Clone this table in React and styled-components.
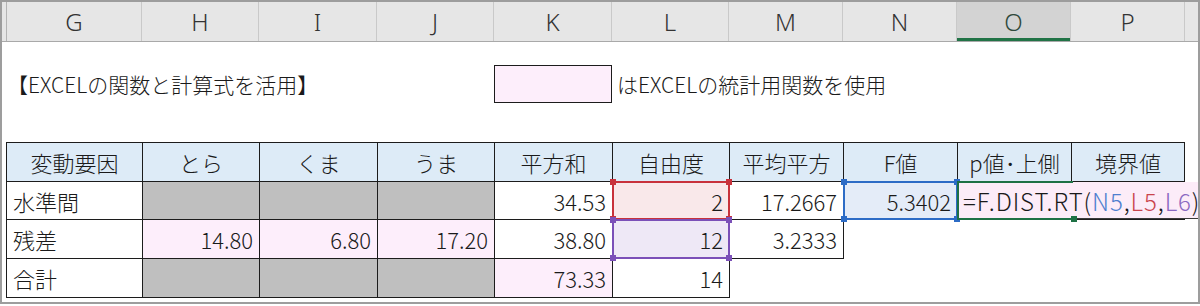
import React from "react";
import styled, { createGlobalStyle, css } from "styled-components";

const GlobalStyle = createGlobalStyle`
  html, body { margin: 0; padding: 0; background: #ffffff; }
  body { font-family: "Noto Sans CJK JP", "Noto Sans", sans-serif; font-weight: 300; }
  *, *::before, *::after { box-sizing: border-box; }
`;

const COLUMNS = [
  { key: "G", width: 135 },
  { key: "H", width: 117 },
  { key: "I", width: 118 },
  { key: "J", width: 117 },
  { key: "K", width: 118 },
  { key: "L", width: 117 },
  { key: "M", width: 114 },
  { key: "N", width: 114 },
  { key: "O", width: 114, active: true },
  { key: "P", width: 114 },
];

const TABLE_WIDTHS = [136, 117, 118, 117, 118, 117, 114, 114, 114, 113];

const FILLS = {
  head: "#ddebf7",
  gray: "#bfbfbf",
  pink: "#fdeefb",
  white: "#ffffff",
};

const REF = {
  red: { line: "#c8323c", tint: "rgba(200, 50, 60, 0.11)" },
  purple: { line: "#7b50b8", tint: "rgba(123, 80, 184, 0.13)" },
  blue: { line: "#2d6cc6", tint: "rgba(45, 108, 198, 0.13)" },
  green: { line: "#1e7145", tint: "transparent" },
};

const Window = styled.div`
  width: 1200px;
  height: 304px;
  border: 2px solid #9d9d9d;
  background: #ffffff;
  overflow: hidden;
`;

const ColumnBar = styled.div`
  display: flex;
  height: 40px;
  background: #e6e6e6;
  border-bottom: 1px solid #a9a9a9;
`;

const Corner = styled.div`
  width: 5px;
  flex: none;
  border-right: 1px solid #b4b4b4;
`;

const ColHead = styled.div`
  flex: none;
  width: ${(p) => p.$w}px;
  display: flex;
  align-items: center;
  justify-content: center;
  font-family: "Noto Sans", "Liberation Sans", sans-serif;
  font-weight: 300;
  font-size: 24px;
  color: #333333;
  border-right: 1px solid #c9c9c9;
  ${(p) =>
    p.$active &&
    css`
      background: #d3d3d3;
      color: #2f4a3c;
      box-shadow: inset 0 -3px 0 #217346;
    `}
`;

const Sheet = styled.div`
  padding-left: 4px;
`;

const BannerRow = styled.div`
  display: grid;
  grid-template-columns: ${COLUMNS.map((c) => `${c.width}px`).join(" ")};
  height: 38px;
  margin: 23px 0 0 1px;
  align-items: center;
  font-size: 21px;
  color: #1a1a1a;
`;

const Title = styled.div`
  grid-column: 1 / span 4;
  white-space: nowrap;
`;

const LegendSwatch = styled.div`
  grid-column: 5;
  align-self: stretch;
  background: ${FILLS.pink};
  border: 1px solid #1c1c1c;
`;

const LegendNote = styled.div`
  grid-column: 6 / span 5;
  white-space: nowrap;
  padding-left: 5px;
`;

const Table = styled.table`
  border-collapse: collapse;
  table-layout: fixed;
  width: ${TABLE_WIDTHS.reduce((a, b) => a + b, 0)}px;
  margin-top: 39px;
`;

const Row = styled.tr`
  height: ${(p) => p.$h}px;
`;

const Cell = styled.td`
  position: relative;
  padding: 0 6px;
  font-size: 22px;
  color: #1a1a1a;
  white-space: nowrap;
  overflow: visible;
  text-align: ${(p) => p.$align || "left"};
  background: ${(p) => (p.$fill ? FILLS[p.$fill] : "transparent")};
  border: ${(p) => (p.$plain ? "none" : "1px solid #1c1c1c")};
`;

const Value = styled.span`
  position: relative;
  z-index: 2;
`;

const RefFrame = styled.span`
  position: absolute;
  z-index: 1;
  top: -1px;
  left: -1px;
  bottom: -1px;
  right: -1px;
  border: 2px solid ${(p) => p.$line};
  background: ${(p) => p.$tint};
  pointer-events: none;
  ${(p) =>
    p.$open &&
    css`
      right: auto;
      width: ${p.$open}px;
      border-right: none;
    `}
`;

const Handle = styled.span`
  position: absolute;
  width: 6px;
  height: 6px;
  background: ${(p) => p.$line};
  ${(p) => p.$v}: -4px;
  ${(p) => p.$h}: -4px;
`;

const Editor = styled.div`
  position: absolute;
  z-index: 1;
  top: 0;
  bottom: 0;
  left: 0;
  right: -20px;
  display: flex;
  align-items: center;
  padding-left: 5px;
  background: #fcecf8;
  border-bottom: 1px solid #3a3a3a;
  font-size: 24px;
  letter-spacing: 0.9px;
  color: #1a1a1a;
  white-space: nowrap;
`;

const Arg = styled.span`
  color: ${(p) => p.$c};
`;

function RefBox({ tone, open, corners = ["tl", "tr", "bl", "br"] }) {
  const { line, tint } = REF[tone];
  const pos = {
    tl: ["top", "left"],
    tr: ["top", "right"],
    bl: ["bottom", "left"],
    br: ["bottom", "right"],
  };
  return (
    <RefFrame $line={line} $tint={tint} $open={open}>
      {corners.map((c) => (
        <Handle key={c} $line={line} $v={pos[c][0]} $h={pos[c][1]} />
      ))}
    </RefFrame>
  );
}

const HEADERS = ["変動要因", "とら", "くま", "うま", "平方和", "自由度", "平均平方", "F値", "p値･上側", "境界値"];

export default function App() {
  return (
    <>
      <GlobalStyle />
      <Window>
        <ColumnBar>
          <Corner />
          {COLUMNS.map((c) => (
            <ColHead key={c.key} $w={c.width} $active={c.active}>
              {c.key}
            </ColHead>
          ))}
        </ColumnBar>
        <Sheet>
          <BannerRow>
            <Title>【EXCELの関数と計算式を活用】</Title>
            <LegendSwatch />
            <LegendNote>はEXCELの統計用関数を使用</LegendNote>
          </BannerRow>

          <Table>
            <colgroup>
              {TABLE_WIDTHS.map((w, i) => (
                <col key={i} style={{ width: w }} />
              ))}
            </colgroup>
            <tbody>
              <Row $h={39}>
                {HEADERS.map((h) => (
                  <Cell key={h} $fill="head" $align="center">
                    {h}
                  </Cell>
                ))}
              </Row>
              <Row $h={38}>
                <Cell>水準間</Cell>
                <Cell $fill="gray" />
                <Cell $fill="gray" />
                <Cell $fill="gray" />
                <Cell $align="right">34.53</Cell>
                <Cell $align="right">
                  <Value>2</Value>
                  <RefBox tone="red" />
                </Cell>
                <Cell $align="right">17.2667</Cell>
                <Cell $align="right">
                  <Value>5.3402</Value>
                  <RefBox tone="blue" />
                </Cell>
                <Cell colSpan={2} $fill="pink">
                  <Editor>
                    =F.DIST.RT(<Arg $c="#4f7fcf">N5</Arg>,<Arg $c="#c9444c">L5</Arg>,
                    <Arg $c="#8a68c0">L6</Arg>)
                  </Editor>
                  <RefBox tone="green" open={116} corners={["br"]} />
                </Cell>
              </Row>
              <Row $h={39}>
                <Cell>残差</Cell>
                <Cell $fill="pink" $align="right">14.80</Cell>
                <Cell $fill="pink" $align="right">6.80</Cell>
                <Cell $fill="pink" $align="right">17.20</Cell>
                <Cell $align="right">38.80</Cell>
                <Cell $align="right">
                  <Value>12</Value>
                  <RefBox tone="purple" />
                </Cell>
                <Cell $align="right">3.2333</Cell>
                <Cell $plain />
                <Cell $plain colSpan={2} />
              </Row>
              <Row $h={39}>
                <Cell>合計</Cell>
                <Cell $fill="gray" />
                <Cell $fill="gray" />
                <Cell $fill="gray" />
                <Cell $fill="pink" $align="right">73.33</Cell>
                <Cell $align="right">14</Cell>
                <Cell $plain />
                <Cell $plain />
                <Cell $plain colSpan={2} />
              </Row>
            </tbody>
          </Table>
        </Sheet>
      </Window>
    </>
  );
}
